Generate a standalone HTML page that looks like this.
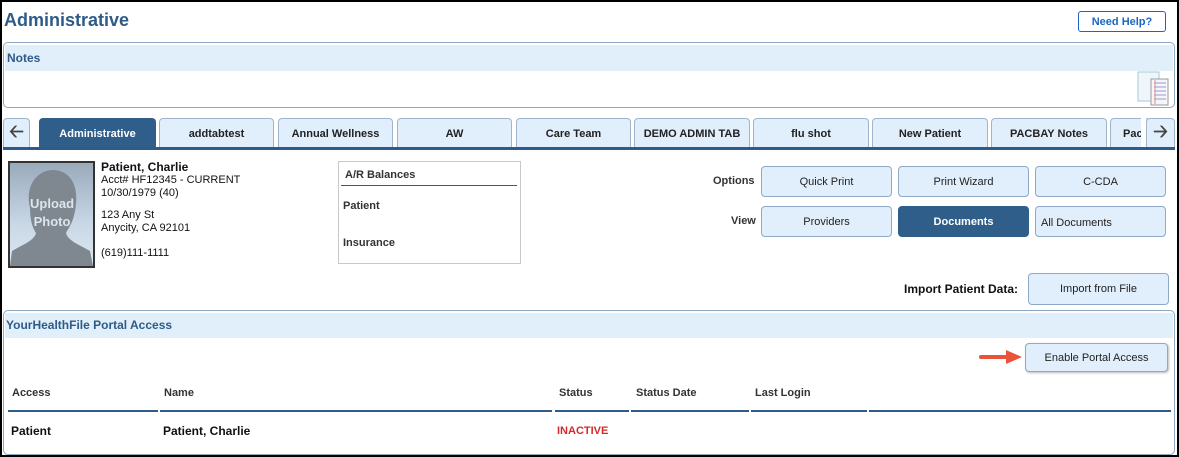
<!DOCTYPE html>
<html><head><style>
*{margin:0;padding:0;box-sizing:border-box}
body{width:1179px;height:457px;position:relative;background:#fff;font-family:"Liberation Sans",Arial,sans-serif;overflow:hidden}
.a{position:absolute}
.t{position:absolute;white-space:nowrap}
.btn{position:absolute;background:#e1eefb;border:1px solid #8fa9c6;border-radius:4px;font-size:11px;color:#222;display:flex;align-items:center;justify-content:center}
.tab{position:absolute;top:118px;height:30px;background:#e1eefb;border:1px solid #9fb5cc;border-bottom:none;border-radius:4px 4px 0 0;font-size:11px;font-weight:bold;color:#222;display:flex;align-items:center;justify-content:center}
.hd{font-size:11px;font-weight:bold;color:#333}
.ul{position:absolute;top:410px;height:2px;background:#2e5b87}
</style></head><body>
<div class="t" style="left:4px;top:10px;font-size:18px;font-weight:bold;color:#2e5b87">Administrative</div>
<div class="a" style="left:1078px;top:11px;width:88px;height:21px;border:1.5px solid #1a66c2;border-radius:3px;color:#1a66c2;font-size:11px;font-weight:bold;display:flex;align-items:center;justify-content:center">Need Help?</div>

<div class="a" style="left:3px;top:42px;width:1172px;height:66px;border:1px solid #8fa7c0;border-radius:5px;overflow:hidden">
 <div class="a" style="left:1px;top:2px;width:1168px;height:26px;background:#e1effb"></div>
 <div class="t" style="left:3px;top:8px;font-size:12px;font-weight:bold;color:#2e5b87">Notes</div>
</div>
<svg class="a" style="left:1137px;top:70px" width="34" height="38" viewBox="0 0 34 38">
<rect x="1" y="2" width="21" height="29" fill="#eef6fb" stroke="#a9c9d8"/>
<rect x="14" y="9" width="17" height="26" fill="#f6f6fa" stroke="#999"/>
<line x1="17" y1="13" x2="29" y2="13" stroke="#99c"/><line x1="17" y1="17" x2="29" y2="17" stroke="#99c"/><line x1="17" y1="21" x2="29" y2="21" stroke="#99c"/><line x1="17" y1="25" x2="29" y2="25" stroke="#99c"/><line x1="17" y1="29" x2="29" y2="29" stroke="#99c"/>
<line x1="18" y1="10" x2="18" y2="34" stroke="#e88"/></svg>

<div class="tab" style="left:3px;width:27px;font-size:18px;color:#444">&#129120;</div>
<div class="tab" style="left:39px;width:117px;background:#2f5e8a;color:#fff;border-color:#2f5e8a">Administrative</div>
<div class="tab" style="left:159px;width:115px">addtabtest</div>
<div class="tab" style="left:278px;width:115px">Annual Wellness</div>
<div class="tab" style="left:397px;width:115px">AW</div>
<div class="tab" style="left:516px;width:115px">Care Team</div>
<div class="tab" style="left:634px;width:116px">DEMO ADMIN TAB</div>
<div class="tab" style="left:753px;width:116px">flu shot</div>
<div class="tab" style="left:872px;width:116px">New Patient</div>
<div class="tab" style="left:991px;width:116px">PACBAY Notes</div>
<div class="tab" style="left:1110px;width:40px;justify-content:flex-start;padding-left:12px;overflow:hidden">Pac</div>
<div class="a" style="left:1141px;top:118px;width:5px;height:30px;background:#fff"></div>
<div class="tab" style="left:1146px;width:29px;font-size:18px;color:#444">&#129122;</div>
<div class="a" style="left:3px;top:147px;width:1172px;height:3px;background:#2e5b87"></div>

<div class="a" style="left:8px;top:161px;width:87px;height:107px;border:2px solid #333;background:linear-gradient(#9ab 0%,#c9d8e6 60%,#dde8f2 100%);overflow:hidden">
<svg width="83" height="103" viewBox="0 0 83 103"><path d="M20 45 C14 20 30 6 44 7 C60 8 70 22 65 48 C63 60 58 66 56 70 C58 78 70 82 80 88 L83 103 L0 103 L2 88 C12 82 24 78 26 70 C22 64 20 56 20 45Z" fill="#7f8890"/></svg>
<div class="t" style="left:20px;top:32px;color:#dde4ea;font-size:13px;font-weight:bold;line-height:18px;text-align:center">Upload<br>Photo</div></div>
<div class="t" style="left:101px;top:160px;font-size:12px;font-weight:bold;color:#111">Patient, Charlie</div>
<div class="t" style="left:101px;top:174px;font-size:11px;color:#111;line-height:13px">Acct# HF12345 - CURRENT<br>10/30/1979 (40)</div>
<div class="t" style="left:101px;top:209px;font-size:11px;color:#111;line-height:13px">123 Any St<br>Anycity, CA 92101</div>
<div class="t" style="left:101px;top:247px;font-size:11px;color:#111">(619)111-1111</div>

<div class="a" style="left:338px;top:161px;width:183px;height:103px;border:1px solid #c8c8c8"></div>
<div class="t hd" style="left:345px;top:169px">A/R Balances</div>
<div class="a" style="left:341px;top:185px;width:176px;height:1px;background:#2e5b87"></div>
<div class="t hd" style="left:343px;top:200px">Patient</div>
<div class="t hd" style="left:343px;top:237px">Insurance</div>

<div class="t hd" style="left:713px;top:175px">Options</div>
<div class="btn" style="left:761px;top:166px;width:131px;height:31px">Quick Print</div>
<div class="btn" style="left:898px;top:166px;width:131px;height:31px">Print Wizard</div>
<div class="btn" style="left:1035px;top:166px;width:131px;height:31px">C-CDA</div>
<div class="t hd" style="left:731px;top:215px">View</div>
<div class="btn" style="left:761px;top:206px;width:131px;height:31px">Providers</div>
<div class="btn" style="left:898px;top:206px;width:131px;height:31px;background:#2f5e8a;border-color:#2f5e8a;color:#fff;font-weight:bold">Documents</div>
<div class="btn" style="left:1035px;top:206px;width:131px;height:31px;justify-content:flex-start;padding-left:5px;padding-top:2px">All Documents</div>
<div class="t" style="left:904px;top:282px;font-size:12px;font-weight:bold;color:#111">Import Patient Data:</div>
<div class="btn" style="left:1028px;top:273px;width:141px;height:32px;font-size:11px">Import from File</div>

<div class="a" style="left:3px;top:310px;width:1172px;height:145px;border:1px solid #8fa7c0;border-radius:5px;overflow:hidden">
 <div class="a" style="left:1px;top:2px;width:1168px;height:25px;background:#e1effb"></div>
</div>
<div class="t" style="left:6px;top:318px;font-size:12px;font-weight:bold;color:#2e5b87">YourHealthFile Portal Access</div>
<div class="btn" style="left:1025px;top:343px;width:143px;height:29px;font-size:11px;box-shadow:1px 1px 2px #bbb">Enable Portal Access</div>
<svg class="a" style="left:978px;top:348px" width="46" height="18"><line x1="3" y1="9" x2="32" y2="9" stroke="#e8533a" stroke-width="4" stroke-linecap="round"/><path d="M28 2 L44 9 L28 16 Z" fill="#e8533a"/></svg>

<div class="t hd" style="left:12px;top:387px">Access</div>
<div class="t hd" style="left:164px;top:387px">Name</div>
<div class="t hd" style="left:559px;top:387px">Status</div>
<div class="t hd" style="left:636px;top:387px">Status Date</div>
<div class="t hd" style="left:755px;top:387px">Last Login</div>
<div class="ul" style="left:8px;width:150px"></div>
<div class="ul" style="left:160px;width:392px"></div>
<div class="ul" style="left:555px;width:74px"></div>
<div class="ul" style="left:631px;width:118px"></div>
<div class="ul" style="left:751px;width:116px"></div>
<div class="ul" style="left:869px;width:302px"></div>
<div class="t" style="left:11px;top:424px;font-size:12px;font-weight:bold;color:#111">Patient</div>
<div class="t" style="left:163px;top:424px;font-size:12px;font-weight:bold;color:#111">Patient, Charlie</div>
<div class="t" style="left:557px;top:425px;font-size:11px;font-weight:bold;color:#d42a2a">INACTIVE</div>
<div class="a" style="left:0;top:0;width:1179px;height:457px;border:2px solid #000;pointer-events:none"></div>
</body></html>
